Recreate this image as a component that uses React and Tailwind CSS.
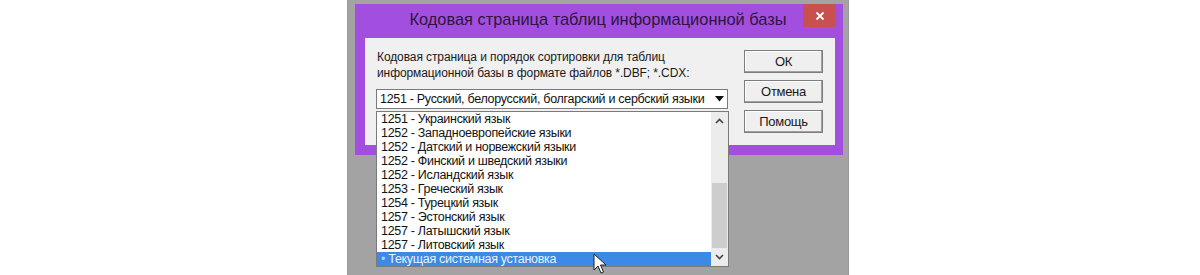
import React from "react";

const items = [
  "1251 - Украинский язык",
  "1252 - Западноевропейские языки",
  "1252 - Датский и норвежский языки",
  "1252 - Финский и шведский языки",
  "1252 - Исландский язык",
  "1253 - Греческий язык",
  "1254 - Турецкий язык",
  "1257 - Эстонский язык",
  "1257 - Латышский язык",
  "1257 - Литовский язык",
];

function Btn({ children }) {
  return (
    <div className="w-[79px] h-[23px] bg-[#efefef] border border-[#7d7d7d] shadow-[inset_-1px_-1px_0_#a0a0a0,inset_1px_1px_0_#ffffff] flex items-center justify-center text-[13px] text-[#1a1a1a] tracking-[-0.3px]">
      {children}
    </div>
  );
}

export default function App() {
  return (
    <div className="w-[1200px] h-[275px] bg-white flex overflow-hidden" style={{ fontFamily: '"Liberation Sans", Arial, sans-serif' }}>
      <div className="w-[347px] shrink-0" />
      <div className="relative w-[502px] h-full bg-[#a3a3a3] border-l border-r border-[#9a9a9a] pl-[7px] pt-[4px]">
        {/* window */}
        <div className="w-[488px] h-[151px] bg-[#a24fdf] flex flex-col pl-[10px] pr-[8px] pb-[10px]">
          <div className="h-[34px] flex items-center relative">
            <div className="flex-1 text-center text-[16.4px] text-[#2c1640] pr-[4px] pb-[3px]">
              Кодовая страница таблиц информационной базы
            </div>
            <div className="absolute right-[-1px] top-0 w-[33px] h-[23px] bg-[#c8504f] flex items-center justify-center">
              <svg width="10" height="10" viewBox="0 0 10 10">
                <path d="M1.5 1.5 L8.5 8.5 M8.5 1.5 L1.5 8.5" stroke="#fff" strokeWidth="1.8" />
              </svg>
            </div>
          </div>
          <div className="flex-1 bg-[#f0f0f0] flex pl-[12px] pt-[11px]">
            <div className="w-[367px] flex flex-col">
              <div className="text-[12px] leading-[16px] text-[#1a1a1a] tracking-[-0.1px]">
                <div>Кодовая страница и порядок сортировки для таблиц</div>
                <div>информационной базы в формате файлов *.DBF; *.CDX:</div>
              </div>
              <div className="mt-[8px] ml-[-1px] w-[352px] h-[20px] bg-white border border-[#7a7a7a] flex items-center">
                <div className="flex-1 pl-[3px] text-[12.5px] text-[#111] tracking-[-0.3px] whitespace-nowrap overflow-hidden">
                  1251 - Русский, белорусский, болгарский и сербский языки
                </div>
                <div className="w-[16px] h-full flex items-center justify-center">
                  <svg width="9" height="6" viewBox="0 0 9 6"><path d="M0 0 H9 L4.5 5.5 Z" fill="#111" /></svg>
                </div>
              </div>
            </div>
            <div className="flex flex-col gap-[7px] pt-[1px]">
              <Btn>ОК</Btn>
              <Btn>Отмена</Btn>
              <Btn>Помощь</Btn>
            </div>
          </div>
        </div>

        {/* dropdown list */}
        <div className="absolute left-[28px] top-[111px] w-[353px] h-[156px] bg-white border border-[#7a7a7a] flex">
          <div className="flex-1 flex flex-col">
            {items.map((t) => (
              <div key={t} className="h-[14px] leading-[14px] pl-[4px] text-[12.5px] text-[#111] tracking-[-0.3px] whitespace-nowrap">
                {t}
              </div>
            ))}
            <div className="h-[14px] leading-[14px] pl-[4px] text-[12.5px] text-[#eaf2ff] bg-[#3c8ae6] tracking-[-0.3px] whitespace-nowrap">
              <span className="text-[#a9d0ff]">•</span> Текущая системная установка
            </div>
          </div>
          <div className="w-[17px] bg-[#ececec] flex flex-col">
            <div className="h-[17px] flex items-center justify-center">
              <svg width="9" height="6" viewBox="0 0 9 6"><path d="M1 5 L4.5 1.5 L8 5" stroke="#444" strokeWidth="1.6" fill="none" /></svg>
            </div>
            <div className="h-[54px]" />
            <div className="flex-1 bg-[#cdcdcd] mx-[1px]" />
            <div className="h-[18px] flex items-center justify-center">
              <svg width="9" height="6" viewBox="0 0 9 6"><path d="M1 1 L4.5 4.5 L8 1" stroke="#444" strokeWidth="1.6" fill="none" /></svg>
            </div>
          </div>
        </div>

        {/* cursor */}
        <svg className="absolute left-[245px] top-[253px]" width="14" height="22" viewBox="0 0 14 22">
          <path d="M1 1 L1 17 L5 13 L8 20 L10.5 19 L7.5 12 L13 12 Z" fill="#fff" stroke="#222" strokeWidth="1" strokeLinejoin="round" />
        </svg>
      </div>
      <div className="flex-1" />
    </div>
  );
}
